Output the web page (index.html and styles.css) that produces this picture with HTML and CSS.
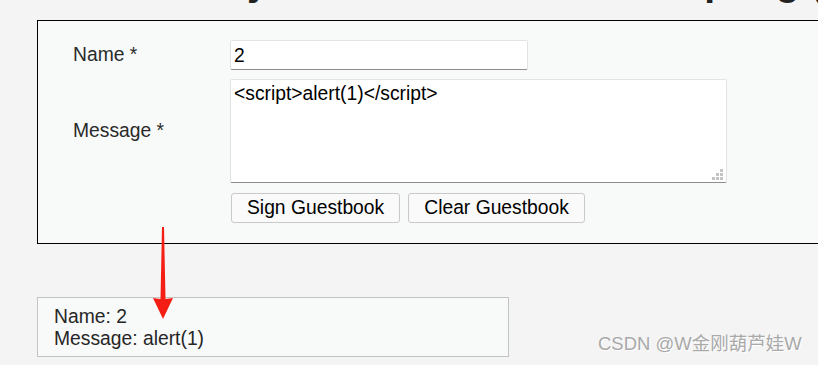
FILE: index.html
```html
<!DOCTYPE html>
<html lang="en">
<head>
<meta charset="utf-8">
<title>Stored XSS</title>
<link rel="stylesheet" href="styles.css">
</head>
<body>
<div class="page">
  <h1 class="title">Vulnerability: Stored Cross Site Scripting (XSS)</h1>
  <div class="vulnerable-code-area">
    <form class="guestbook-form" onsubmit="return false;">
      <label class="label" for="txtName">Name *</label>
      <div class="field"><input id="txtName" class="text-input" type="text" value="2"></div>
      <label class="label" for="mtxMessage">Message *</label>
      <div class="field textarea-wrap">
        <textarea id="mtxMessage" class="text-area">&lt;script&gt;alert(1)&lt;/script&gt;</textarea>
        <span class="grip">
          <i></i><i></i><i></i><i></i><i></i><i></i>
        </span>
      </div>
      <div class="spacer"></div>
      <div class="buttons">
        <button class="btn" type="button">Sign Guestbook</button>
        <button class="btn" type="button">Clear Guestbook</button>
      </div>
    </form>
  </div>
  <div class="guestbook-comment">
    <div>Name: 2</div>
    <div>Message: alert(1)</div>
  </div>
</div>
<svg class="arrow" width="30" height="100" viewBox="0 0 30 100" aria-hidden="true">
  <path d="M14 0 L16 0 L17.5 72 L25 71 L15 92 L5 71 L12.5 72 Z" fill="#f51e14"/>
</svg>
<div class="watermark">CSDN @W金刚葫芦娃W</div>
</body>
</html>
```
FILE: styles.css
```css
html, body {
  margin: 0;
  padding: 0;
  overflow: hidden;
}
body {
  background: #f4f4f4;
  font-family: "Liberation Sans", Arial, sans-serif;
  font-size: 19.3px;
  color: #262626;
  width: 818px;
  height: 365px;
  position: relative;
}
.page {
  padding-left: 37px;
}
.title {
  font-size: 39px;
  font-weight: bold;
  line-height: 44px;
  white-space: nowrap;
  color: #222;
  margin: -40px 0 16px -1px;
}
.vulnerable-code-area {
  width: 900px;
  box-sizing: border-box;
  border: 1px solid #000;
  background: #f8f9f9;
  padding: 19px 0 20px 35px;
}
.guestbook-form {
  display: grid;
  grid-template-columns: 157px auto;
  align-items: center;
  row-gap: 9px;
}
.label {
  color: #2a2a2a;
}
.field {
  display: flex;
}
.text-input {
  box-sizing: border-box;
  width: 298px;
  height: 30px;
  margin: 0;
  padding: 1px 3px 0;
  border: 1px solid #e3e3e3;
  border-bottom-color: #8c8c8c;
  border-radius: 2px;
  background: #fff;
  font-family: "Liberation Sans", Arial, sans-serif;
  font-size: 19.3px;
  color: #000;
  outline: none;
}
.textarea-wrap {
  position: relative;
  width: 497px;
}
.text-area {
  box-sizing: border-box;
  width: 497px;
  height: 104px;
  margin: 0;
  padding: 3px 3px;
  border: 1px solid #e3e3e3;
  border-bottom-color: #8c8c8c;
  border-radius: 2px;
  background: #fff;
  font-family: "Liberation Sans", Arial, sans-serif;
  font-size: 19.3px;
  line-height: 22px;
  color: #000;
  resize: none;
  outline: none;
}
.grip {
  position: absolute;
  right: 4px;
  bottom: 3px;
  width: 11px;
  height: 11px;
  display: grid;
  grid-template-columns: repeat(3, 3px);
  grid-template-rows: repeat(3, 3px);
  gap: 1px;
}
.grip i {
  display: block;
  background: #c4c4c4;
}
.grip i:nth-child(1) { grid-column: 3; grid-row: 1; }
.grip i:nth-child(2) { grid-column: 2; grid-row: 2; }
.grip i:nth-child(3) { grid-column: 3; grid-row: 2; }
.grip i:nth-child(4) { grid-column: 1; grid-row: 3; }
.grip i:nth-child(5) { grid-column: 2; grid-row: 3; }
.grip i:nth-child(6) { grid-column: 3; grid-row: 3; }
.buttons {
  display: flex;
  gap: 8px;
  margin: 1px 0 0 1px;
}
.btn {
  box-sizing: border-box;
  height: 30px;
  margin: 0;
  padding: 0 15px;
  border: 1px solid #c9c9c9;
  border-radius: 3px;
  background: #fafafa;
  font-family: "Liberation Sans", Arial, sans-serif;
  font-size: 19.3px;
  color: #000;
}
.guestbook-comment {
  box-sizing: border-box;
  width: 472px;
  margin-top: 53px;
  border: 1px solid #c3c3c3;
  background: #f8f9f9;
  padding: 8px 16px 6px;
  line-height: 22px;
  color: #262626;
}
.arrow {
  position: absolute;
  left: 148px;
  top: 227px;
}
.watermark {
  position: absolute;
  left: 598px;
  top: 333px;
  font-family: "Liberation Sans", "Noto Sans CJK SC", sans-serif;
  font-size: 18.5px;
  line-height: 22px;
  color: #a9a9a9;
  text-shadow: 1px 1px 0 #ffffff;
  white-space: nowrap;
}
```
